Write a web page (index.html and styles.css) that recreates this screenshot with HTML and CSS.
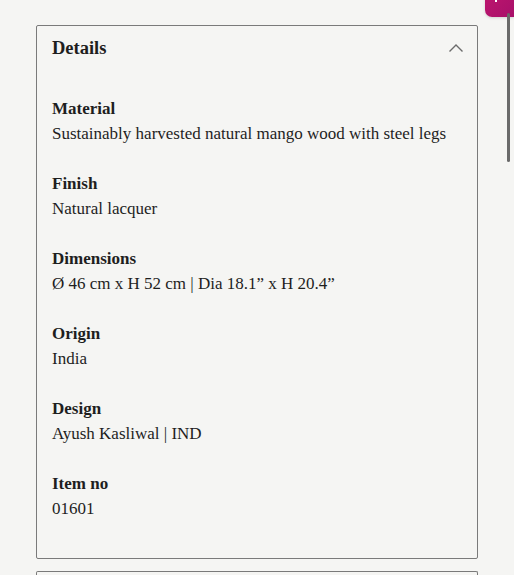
FILE: index.html
```html
<!DOCTYPE html>
<html lang="en">
<head>
<meta charset="utf-8">
<title>Details</title>
<link rel="stylesheet" href="styles.css">
</head>
<body>
<div class="page">
  <section class="panel">
    <header class="panel-head">
      <h2 class="panel-title">Details</h2>
      <svg class="chevron" width="16" height="10" viewBox="0 0 16 10" aria-hidden="true">
        <path d="M1.5 8.5 L8 2 L14.5 8.5" fill="none" stroke="#6b6b6b" stroke-width="1.4"/>
      </svg>
    </header>
    <dl class="specs">
      <div class="spec"><dt>Material</dt><dd>Sustainably harvested natural mango wood with steel legs</dd></div>
      <div class="spec"><dt>Finish</dt><dd>Natural lacquer</dd></div>
      <div class="spec"><dt>Dimensions</dt><dd>Ø 46 cm x H 52 cm | Dia 18.1” x H 20.4”</dd></div>
      <div class="spec"><dt>Origin</dt><dd>India</dd></div>
      <div class="spec"><dt>Design</dt><dd>Ayush Kasliwal | IND</dd></div>
      <div class="spec"><dt>Item no</dt><dd>01601</dd></div>
    </dl>
  </section>
  <section class="panel panel-next"></section>
</div>
<div class="fab"><span class="fab-mark"></span></div>
<div class="scrollbar"></div>
</body>
</html>
```
FILE: styles.css
```css
html, body {
  margin: 0;
  padding: 0;
  background: #f5f5f3;
  height: 575px;
  overflow: hidden;
}
body {
  font-family: "Liberation Serif", "Times New Roman", serif;
  color: #1e1e1e;
}
.page {
  padding: 25px 36px 0 36px;
  display: flex;
  flex-direction: column;
  gap: 12px;
}
.panel {
  border: 1px solid #7a7a7a;
  border-radius: 2px;
  padding: 10px 15px 37px 15px;
}
.panel-head {
  display: flex;
  align-items: center;
  justify-content: space-between;
  height: 24px;
}
.panel-title {
  margin: 0;
  font-size: 18.5px;
  font-weight: 700;
  line-height: 24px;
}
.chevron {
  display: block;
  margin-right: -2px;
}
.specs {
  margin: 36px 0 0 0;
  display: flex;
  flex-direction: column;
  gap: 25px;
}
.spec dt {
  font-weight: 700;
  font-size: 17px;
  line-height: 25px;
}
.spec dd {
  margin: 0;
  font-size: 17px;
  line-height: 25px;
}
.panel-next {
  height: 3px;
  padding: 0;
  border-bottom: none;
  border-radius: 2px 2px 0 0;
}
.fab {
  position: absolute;
  top: -20px;
  left: 485px;
  width: 29px;
  height: 37px;
  border-radius: 7px 0 0 7px;
  background: linear-gradient(135deg, #c2176f, #a8106a);
  box-shadow: 0 1px 3px rgba(0,0,0,0.15);
}
.fab-mark {
  position: absolute;
  left: 10px;
  top: 19px;
  width: 2px;
  height: 3px;
  background: #fff;
}
.scrollbar {
  position: absolute;
  left: 507px;
  top: 13px;
  width: 3px;
  height: 149px;
  border-radius: 2px;
  background: #6a6a6a;
}
```
